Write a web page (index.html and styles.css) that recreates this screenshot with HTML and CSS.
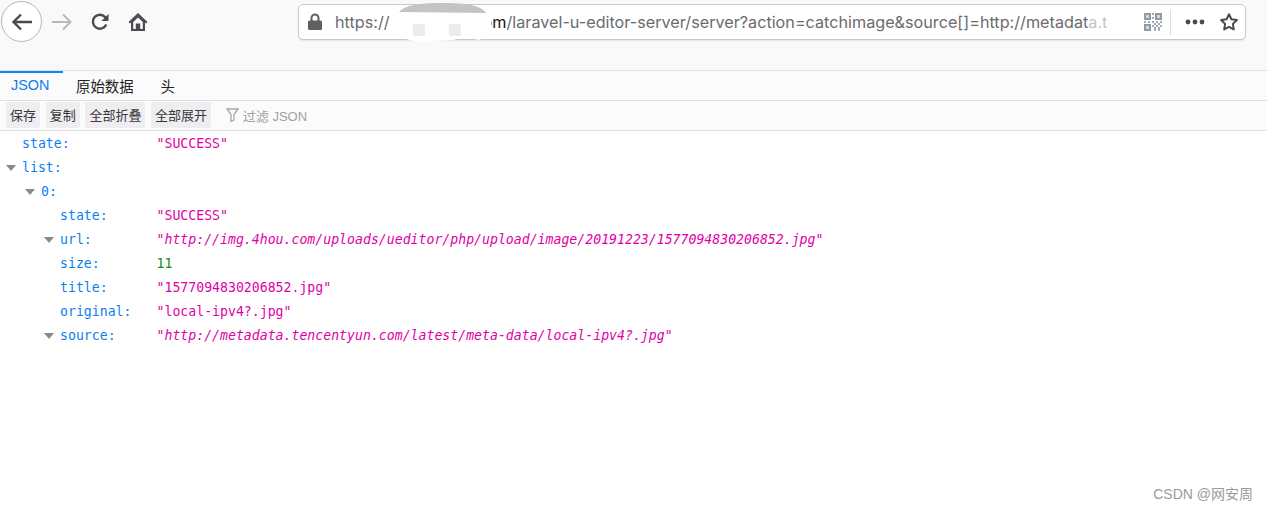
FILE: index.html
```html
<!DOCTYPE html>
<html lang="zh">
<head>
<meta charset="utf-8">
<title>JSON</title>
<link rel="stylesheet" href="styles.css">
</head>
<body>
<header class="chrome">
  <div class="nav">
    <span class="back">
      <svg width="26" height="26" viewBox="0 0 26 26"><path d="M23 13H5M12 5.500 4.500 13l7.500 7.500" fill="none" stroke="#4a4a4f" stroke-width="2.400"/></svg>
    </span>
    <svg class="forward" width="22" height="20" viewBox="0 0 22 20"><path d="M1 10h18M12 2.500 19.500 10 12 17.500" fill="none" stroke="#b8b8ba" stroke-width="2"/></svg>
    <svg class="reload" width="20" height="20" viewBox="0 0 20 20"><path d="M16.300 12.500A7 7 0 1 1 15.500 5.500L17 7" fill="none" stroke="#4a4a4f" stroke-width="2.400"/><path d="M18.500 2v7h-7z" fill="#4a4a4f"/></svg>
    <svg class="home" width="20" height="20" viewBox="0 0 20 20"><path d="M10 1 .5 10l1.400 1.500L3 10.500V19h14v-8.500l1.100 1 1.400-1.500z" fill="#4a4a4f"/><path d="M10 5.500 5.200 10v7h2.600v-5.500h4.400V17h2.600v-7z" fill="#f9f9fa"/></svg>
  </div>
  <div class="urlbar">
    <svg class="lock" width="16" height="18" viewBox="0 0 16 18"><path d="M4.500 8V5a3.500 3.500 0 0 1 7 0v3" fill="none" stroke="#5f5f63" stroke-width="2"/><rect x="1" y="7.500" width="14" height="9.500" rx="1.500" fill="#5f5f63"/></svg>
    <div class="url"><span class="dim">https://</span><span class="gap"></span><span class="host">om</span><span class="dim">/laravel-u-editor-server/server?action=catchimage&amp;source[]=http://metadat</span><span class="fade">a.t</span></div>
    <svg class="redact" width="100" height="40" viewBox="0 0 100 40"><path d="M8 10C14 3 28 1 50 1s39 1 45 10z" fill="#c4c4c4"/><path d="M0 11h100v22l-12 5-14-3-12 3-35 2-20-5z" fill="#fff"/><path d="M22 22h12v12H22zM58 22h12v12H58z" fill="#ececec"/></svg>
    <svg class="qr" width="18" height="18" viewBox="0 0 18 18"><path d="M0 0h7v7H0zM11 0h7v7h-7zM0 11h7v7H0z" fill="#8f9aa6"/><path d="M2 2h3v3H2zM13 2h3v3h-3zM2 13h3v3H2z" fill="#d5d9de"/><path d="M8 0h2v2H8zM8 4h2v2H8zM0 8h2v2H0zM4 8h2v2H4zM8 8h2v2H8zM12 8h2v2h-2zM16 8h2v2h-2zM8 12h2v2H8zM12 12h2v2h-2zM16 12h2v2h-2zM10 16h2v2h-2zM14 16h2v2h-2zM10 10h2v2h-2zM14 10h2v2h-2zM10 14h2v2h-2zM14 14h2v2h-2z" fill="#a3acb6"/></svg>
    <span class="sep"></span>
    <svg class="more" width="20" height="6" viewBox="0 0 20 6"><circle cx="3" cy="3" r="2.400" fill="#4a4a4f"/><circle cx="10" cy="3" r="2.400" fill="#4a4a4f"/><circle cx="17" cy="3" r="2.400" fill="#4a4a4f"/></svg>
    <svg class="star" width="20" height="20" viewBox="0 0 20 20"><path d="M10 2.200l2.400 5 5.500.8-4 3.900.9 5.500-4.800-2.600-4.800 2.600.9-5.500-4-3.900 5.500-.8z" fill="none" stroke="#4a4a4f" stroke-width="2" stroke-linejoin="round"/></svg>
  </div>
</header>
<nav class="tabs">
  <span class="tab active">JSON</span>
  <span class="tab">原始数据</span>
  <span class="tab">头</span>
</nav>
<div class="toolbar">
  <button class="btn">保存</button>
  <button class="btn">复制</button>
  <button class="btn">全部折叠</button>
  <button class="btn">全部展开</button>
  <span class="filter">
    <svg width="13" height="14" viewBox="0 0 13 14"><path d="M1 1h11L8 6.500V12l-3 1.500v-7z" fill="none" stroke="#a8a8aa" stroke-width="1.300"/></svg>
    过滤 JSON
  </span>
</div>
<main class="tree">
  <div class="row"><span class="key l0">state:</span><span class="str">"SUCCESS"</span></div>
  <div class="row"><span class="key l0"><i class="tw"></i>list:</span></div>
  <div class="row"><span class="key l1"><i class="tw"></i>0:</span></div>
  <div class="row"><span class="key l2">state:</span><span class="str">"SUCCESS"</span></div>
  <div class="row"><span class="key l2"><i class="tw"></i>url:</span><span class="str link">"<em>http://img.4hou.com/uploads/ueditor/php/upload/image/20191223/1577094830206852.jpg</em>"</span></div>
  <div class="row"><span class="key l2">size:</span><span class="num">11</span></div>
  <div class="row"><span class="key l2">title:</span><span class="str">"1577094830206852.jpg"</span></div>
  <div class="row"><span class="key l2">original:</span><span class="str">"local-ipv4?.jpg"</span></div>
  <div class="row"><span class="key l2"><i class="tw"></i>source:</span><span class="str link">"<em>http://metadata.tencentyun.com/latest/meta-data/local-ipv4?.jpg</em>"</span></div>
</main>
<footer class="mark">CSDN @网安周</footer>
</body>
</html>
```
FILE: styles.css
```css
* { box-sizing: border-box; }
html, body { margin: 0; height: 510px; overflow: hidden; background: #fff; }
body { font-family: "Liberation Sans", "Noto Sans CJK SC", sans-serif; position: relative; }

.chrome {
  height: 71px;
  background: #f9f9fa;
  border-bottom: 1px solid #e2e2e3;
  display: flex;
  align-items: flex-start;
  padding: 1px 21px 0 1px;
}
.nav { display: flex; align-items: center; height: 41px; width: 297px; }
.back {
  width: 41px; height: 41px;
  border: 1px solid #b4b4b4; border-radius: 50%;
  background: #fff;
  display: flex; align-items: center; justify-content: center;
}
.forward { margin-left: 9px; }
.reload { margin-left: 17px; }
.home { margin-left: 18px; }

.urlbar {
  position: relative;
  flex: 1;
  height: 36px;
  margin-top: 3px;
  background: #fff;
  border: 1px solid #c8c8ca;
  border-radius: 5px;
  box-shadow: 0 1px 1px rgba(0,0,0,.08);
  display: flex;
  align-items: center;
  padding-left: 8px;
}
.lock { flex: none; }
.url {
  margin-left: 12px;
  width: 790px;
  flex: none;
  font-family: "Inter", "Liberation Sans", sans-serif;
  font-size: 16.200px;
  white-space: nowrap;
  overflow: hidden;
}
.dim { color: #6b6b6e; }
.host { color: #111; }
.fade { color: #c4c4c6; }
.gap { display: inline-block; width: 93px; }
.redact { position: absolute; left: 92px; top: -3px; }
.qr { flex: none; margin-left: 19px; }
.sep { width: 1px; height: 25px; background: #dcdcde; margin-left: 8px; flex: none; }
.more { margin-left: 14px; flex: none; }
.star { margin-left: 14px; flex: none; }

.tabs {
  height: 30px;
  background: #fbfbfc;
  border-bottom: 1px solid #e0e0e2;
  display: flex;
  font-size: 14.400px;
  color: #232327;
}
.tab { height: 29px; display: flex; align-items: center; padding: 0 13px 1px; }
.tab.active { color: #0a7cf0; box-shadow: inset 0 2px 0 #0a84ff; width: 63px; padding-left: 11px; }
.tab:nth-child(3) { padding-left: 14px; }

.toolbar {
  height: 30px;
  background: #fbfbfc;
  border-bottom: 1px solid #e0e0e2;
  display: flex;
  align-items: center;
  padding: 0 0 1px 6px;
  gap: 5.700px;
}
.btn {
  height: 26px;
  border: 0;
  border-radius: 2px;
  background: #eeeef0;
  color: #38383d;
  font: 13px/26px "Noto Sans CJK SC", sans-serif;
  padding: 0 4px;
}
.filter {
  display: flex; align-items: center; gap: 4px;
  margin-left: 3px;
  padding-left: 6px;
  font-size: 13px;
  color: #a0a0a4;
  font-family: "Liberation Sans", "Noto Sans CJK SC", sans-serif;
}

.tree {
  padding-top: 1px;
  font: 13.200px/24px "DejaVu Sans Mono", monospace;
}
.row { height: 24px; display: flex; }
.key { color: #0a7ff0; width: 156.500px; position: relative; flex: none; white-space: nowrap; }
.l0 { padding-left: 22px; }
.l1 { padding-left: 41px; }
.l2 { padding-left: 60px; }
.tw {
  position: absolute;
  top: 9px;
  margin-left: -16px;
  border-style: solid;
  border-width: 6px 5px 0;
  border-color: #8a8a8e transparent transparent;
}
.str { color: #e000a8; white-space: nowrap; }
.link em { font-style: italic; }
.num { color: #0a8f0a; }

.mark {
  position: absolute;
  right: 14px;
  top: 483px;
  font-size: 14px;
  color: #9a9a9a;
}
```
